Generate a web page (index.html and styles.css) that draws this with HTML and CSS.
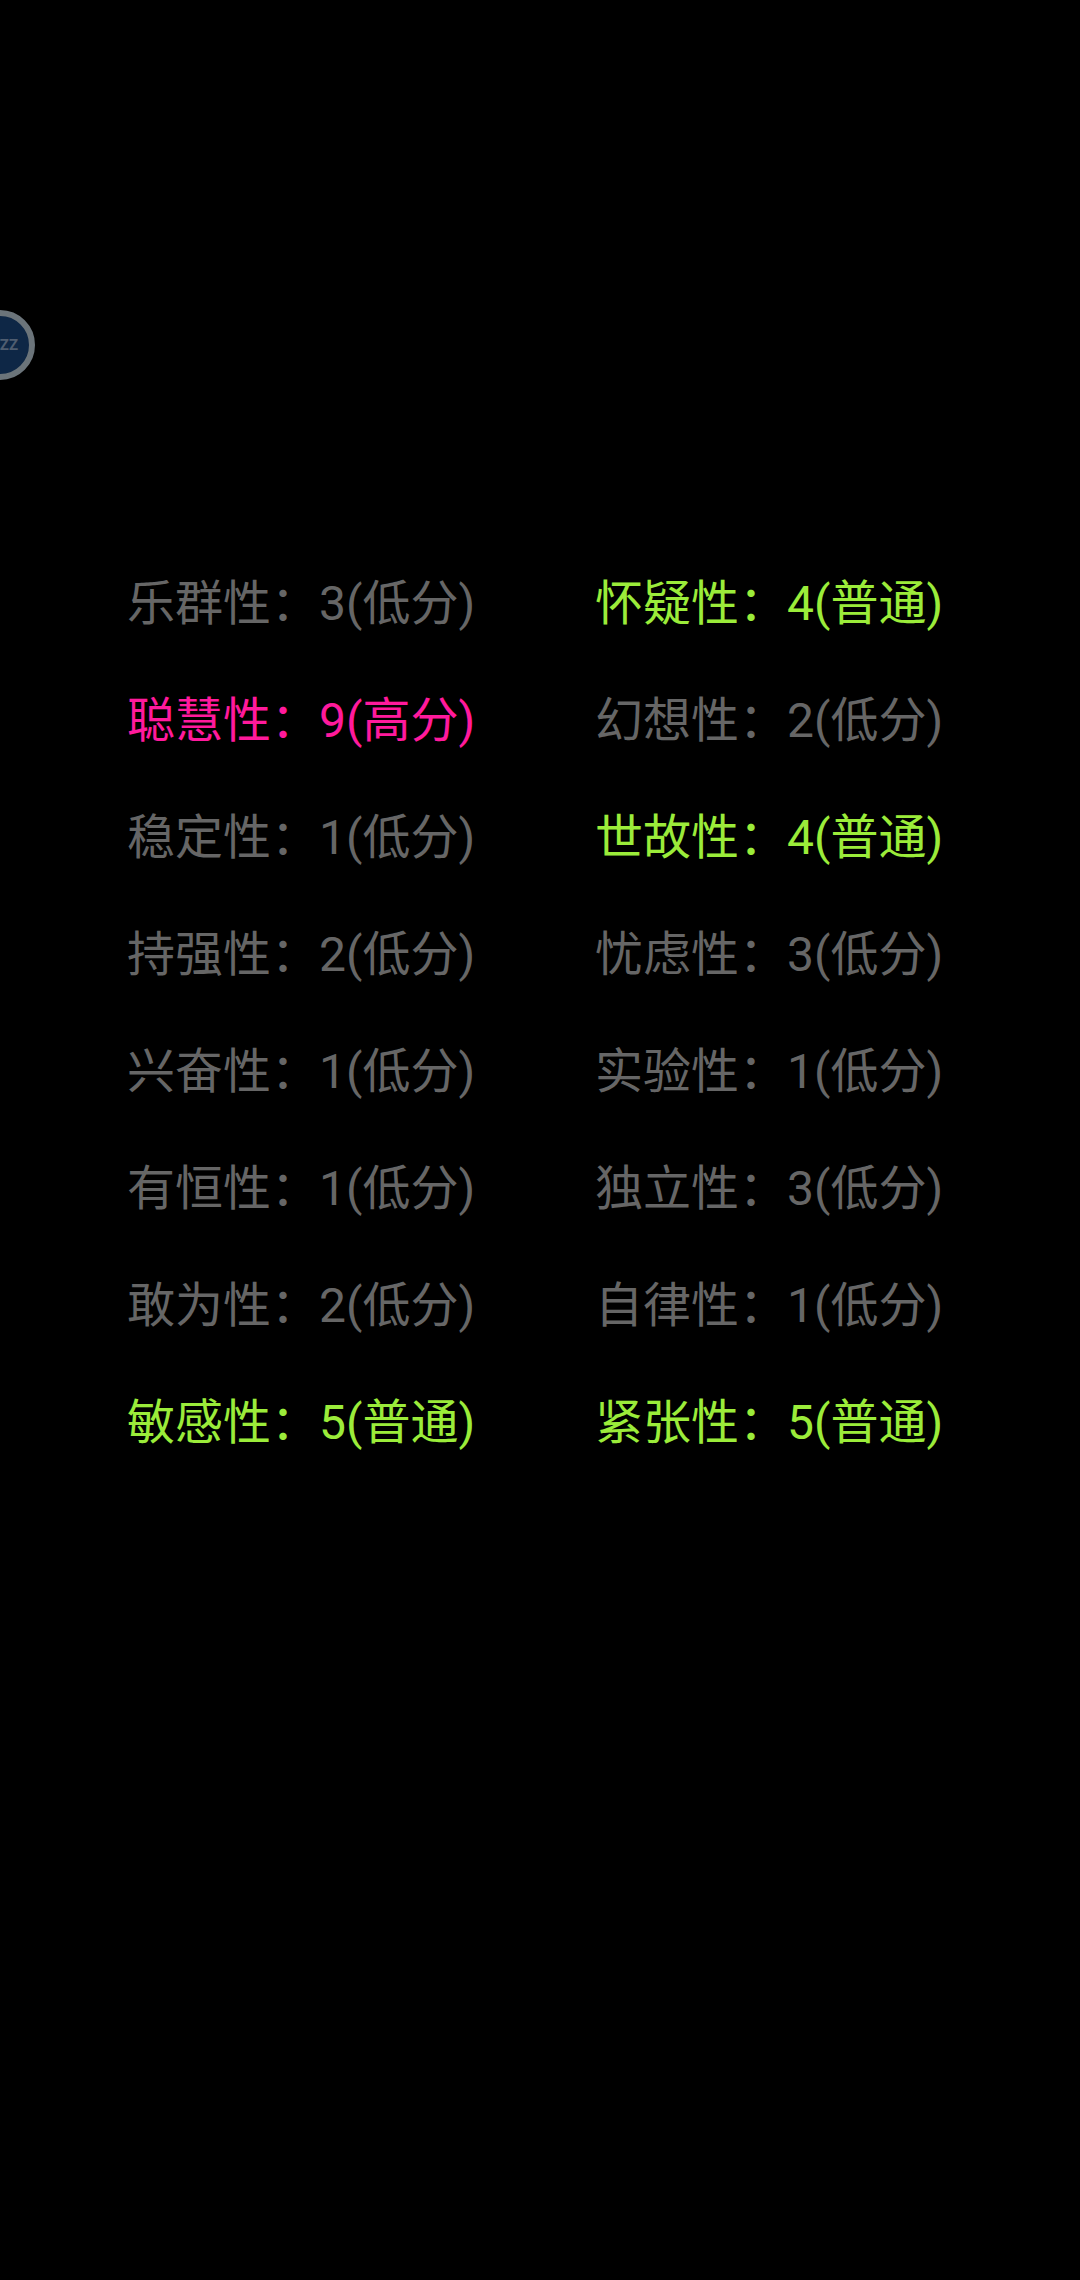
FILE: index.html
```html
<!DOCTYPE html>
<html lang="zh-CN">
<head>
    <meta charset="UTF-8">
    <meta name="viewport" content="width=device-width, initial-scale=1.0">
    <title>16PF</title>
    <link rel="stylesheet" href="styles.css">
</head>
<body>
    <!-- floating bubble at screen edge -->
    <div class="bubble"><span class="bubble-text">ZZ</span></div>

    <div class="score-grid">
        <div class="score low">乐群性：<span class="value">3(低分)</span></div>
        <div class="score mid">怀疑性：<span class="value">4(普通)</span></div>
        <div class="score high">聪慧性：<span class="value">9(高分)</span></div>
        <div class="score low">幻想性：<span class="value">2(低分)</span></div>
        <div class="score low">稳定性：<span class="value">1(低分)</span></div>
        <div class="score mid">世故性：<span class="value">4(普通)</span></div>
        <div class="score low">持强性：<span class="value">2(低分)</span></div>
        <div class="score low">忧虑性：<span class="value">3(低分)</span></div>
        <div class="score low">兴奋性：<span class="value">1(低分)</span></div>
        <div class="score low">实验性：<span class="value">1(低分)</span></div>
        <div class="score low">有恒性：<span class="value">1(低分)</span></div>
        <div class="score low">独立性：<span class="value">3(低分)</span></div>
        <div class="score low">敢为性：<span class="value">2(低分)</span></div>
        <div class="score low">自律性：<span class="value">1(低分)</span></div>
        <div class="score mid">敏感性：<span class="value">5(普通)</span></div>
        <div class="score mid">紧张性：<span class="value">5(普通)</span></div>
    </div>
</body>
</html>
```

FILE: styles.css
```css
html, body {
    height: 100%;
}
body {
    margin: 0;
    background: #000;
    font-family: Roboto, "Noto Sans CJK SC", sans-serif;
    overflow: hidden;
}
.bubble {
    position: absolute;
    left: -35px;
    top: 310px;
    width: 70px;
    height: 70px;
    box-sizing: border-box;
    border: 6px solid #6b747a;
    border-radius: 50%;
    background: #0e2746;
    display: flex;
    align-items: center;
    justify-content: flex-end;
    padding-right: 11px;
}
.bubble-text {
    font-size: 15px;
    font-weight: bold;
    color: #4f5d70;
}
.score-grid {
    display: grid;
    grid-template-columns: 468px 468px;
    grid-auto-rows: 117px;
    padding: 545px 0 0 127px;
}
.score {
    font-size: 48px;
    line-height: 117px;
    white-space: nowrap;
}
.low {
    color: #666;
}
.mid {
    color: #9bec3a;
}
.high {
    color: #ff1a9c;
}
```
